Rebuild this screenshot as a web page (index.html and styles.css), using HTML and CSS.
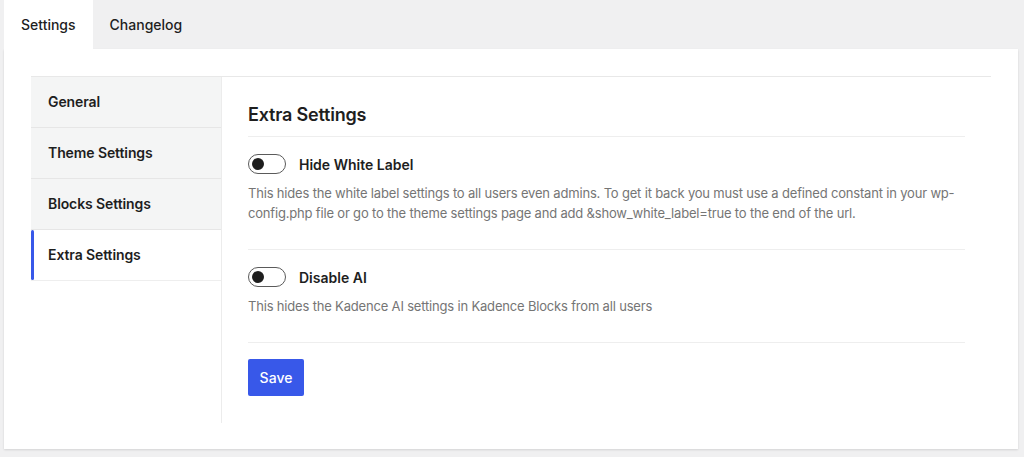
FILE: index.html
```html
<!DOCTYPE html>
<html lang="en">
<head>
<meta charset="utf-8">
<title>Settings</title>
<link rel="stylesheet" href="styles.css">
</head>
<body>
<div class="page">
  <nav class="tabs">
    <a class="tab tab-active">Settings</a>
    <a class="tab">Changelog</a>
  </nav>
  <div class="panel">
    <div class="layout">
      <aside class="sidebar">
        <a class="side-item">General</a>
        <a class="side-item">Theme Settings</a>
        <a class="side-item">Blocks Settings</a>
        <a class="side-item side-active">Extra Settings</a>
      </aside>
      <section class="content">
        <h2 class="title">Extra Settings</h2>
        <div class="setting">
          <div class="setting-row">
            <span class="toggle"><span class="knob"></span></span>
            <span class="setting-label">Hide White Label</span>
          </div>
          <p class="desc">This hides the white label settings to all users even admins. To get it back you must use a defined constant in your wp-config.php file or go to the theme settings page and add &amp;show_white_label=true to the end of the url.</p>
        </div>
        <div class="setting">
          <div class="setting-row">
            <span class="toggle"><span class="knob"></span></span>
            <span class="setting-label">Disable AI</span>
          </div>
          <p class="desc">This hides the Kadence AI settings in Kadence Blocks from all users</p>
        </div>
        <button class="save">Save</button>
      </section>
    </div>
  </div>
</div>
</body>
</html>
```
FILE: styles.css
```css
html, body {
  margin: 0;
  padding: 0;
  background: #f0f0f1;
}
body {
  font-family: Inter, "Noto Sans", "Liberation Sans", sans-serif;
  color: #1e1e1e;
  height: 457px;
  overflow: hidden;
}
.page {
  margin: 0 6px 0 4px;
}
.tabs {
  display: flex;
  height: 49px;
}
.tab {
  display: flex;
  align-items: center;
  padding: 0 17px;
  font-size: 14px;
  font-weight: 500;
  color: #1e1e1e;
}
.tab-active {
  background: #fff;
}
.panel {
  background: #fff;
  padding: 27px;
  height: 346px;
  box-shadow: 0 1px 2px rgba(0, 0, 0, 0.12);
}
.layout {
  display: flex;
  border-top: 1px solid #e8e8e8;
}
.sidebar {
  width: 190px;
  flex: none;
  border-right: 1px solid #ececec;
  display: flex;
  flex-direction: column;
}
.side-item {
  position: relative;
  display: flex;
  align-items: center;
  height: 50px;
  padding: 0 17px 1px;
  box-sizing: border-box;
  min-height: 51px;
  background: #f4f5f5;
  border-bottom: 1px solid #e6e6e6;
  font-size: 14px;
  font-weight: 600;
  letter-spacing: -0.1px;
  color: #1e1e1e;
}
.side-active {
  background: #fff;
  border-bottom-color: #eeeeee;
}
.side-active::before {
  content: "";
  position: absolute;
  left: 0;
  top: 0;
  bottom: 0;
  width: 3px;
  border-radius: 2px;
  background: #3858e9;
}
.content {
  flex: 1;
  padding: 0 26px 27px;
}
.title {
  margin: 26px 0 0;
  font-size: 18px;
  line-height: 24px;
  font-weight: 600;
  letter-spacing: -0.2px;
  padding-bottom: 9px;
  border-bottom: 1px solid #eeeeee;
}
.setting {
  padding: 17px 0 26px;
  border-bottom: 1px solid #eeeeee;
}
.setting-row {
  display: flex;
  align-items: center;
  gap: 13px;
  height: 20px;
}
.toggle {
  box-sizing: border-box;
  width: 38px;
  height: 20px;
  border: 1px solid #5a5a5a;
  border-radius: 10px;
  display: flex;
  align-items: center;
  padding-left: 3px;
}
.knob {
  width: 12px;
  height: 12px;
  border-radius: 50%;
  background: #1e1e1e;
}
.setting-label {
  font-size: 14px;
  font-weight: 600;
  color: #1e1e1e;
}
.desc {
  margin: 9px 0 0;
  font-size: 13px;
  line-height: 20px;
  letter-spacing: -0.18px;
  color: #757575;
}
.save {
  margin-top: 16px;
  height: 37px;
  width: 56px;
  border: none;
  border-radius: 2px;
  background: #3858e9;
  color: #fff;
  font-family: inherit;
  font-size: 14px;
  font-weight: 500;
  padding: 0;
}
```
